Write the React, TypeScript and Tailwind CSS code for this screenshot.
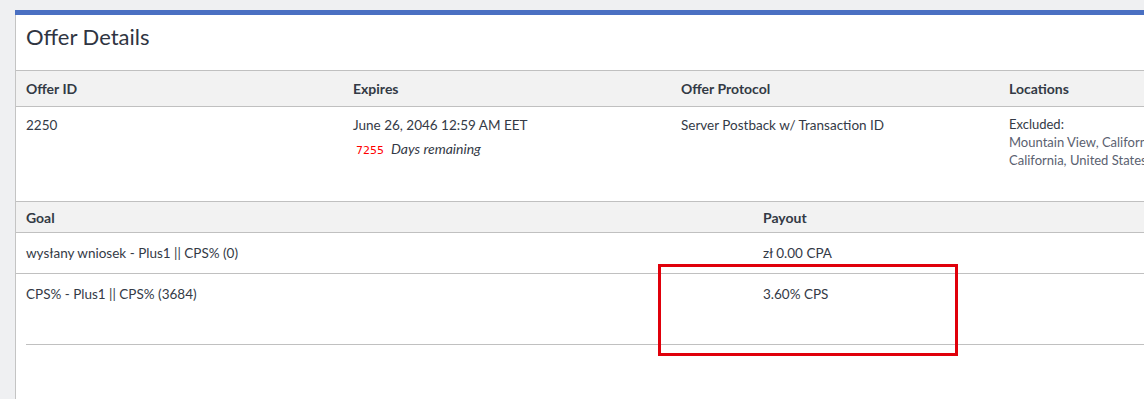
import React from "react";

const font = { fontFamily: "Lato, 'Noto Sans', sans-serif" };

export default function App() {
  return (
    <div className="relative h-[399px] w-[1144px] overflow-hidden bg-[#eff0f2] pl-[15px] pt-[10px] text-[#343a46]" style={font}>
      <div className="w-[1400px] border-t-[5px] border-t-[#4a70c2] bg-white">
        <div className="border-l border-l-[#c4c4c4] h-[400px]">
          <h2 className="pl-[10px] pt-[6px] pb-[18px] text-[22px] leading-[31px] text-[#2f3542]">Offer Details</h2>

          <div className="flex h-[37px] items-center border-y border-[#c0c0c0] bg-[#f2f2f2] text-[14px] font-bold text-[#333a45]">
            <div className="w-[328px] pl-[10px]">Offer ID</div>
            <div className="w-[328px] pl-[9px]">Expires</div>
            <div className="w-[328px] pl-[9px]">Offer Protocol</div>
            <div className="w-[328px] pl-[9px]">Locations</div>
          </div>
          <div className="flex h-[94px] pt-[8px] text-[13.5px] leading-[20px]">
            <div className="w-[328px] pl-[10px]">2250</div>
            <div className="w-[328px] pl-[9px]">
              <div>June 26, 2046 12:59 AM EET</div>
              <div className="mt-[4px] flex items-baseline">
                <span className="ml-[3px] mr-[7px] text-[11px] text-[#ff0000]" style={{ fontFamily: "'DejaVu Sans', sans-serif" }}>7255</span>
                <span className="italic text-[14px]">Days remaining</span>
              </div>
            </div>
            <div className="w-[328px] pl-[9px]">Server Postback w/ Transaction ID</div>
            <div className="w-[328px] pl-[9px] text-[13px]">
              <div className="leading-[18px]">Excluded:</div>
              <div className="leading-[18px] text-[#5a6170]">Mountain View, California, United States</div>
              <div className="leading-[18px] text-[#5a6170]">California, United States</div>
            </div>
          </div>

          <div className="flex h-[32px] items-center border-y border-[#c0c0c0] bg-[#f2f2f2] text-[14px] font-bold text-[#333a45]">
            <div className="w-[737px] pl-[10px]">Goal</div>
            <div className="pl-[10px]">Payout</div>
          </div>
          <div className="flex h-[41px] items-center border-b border-[#c0c0c0] text-[13.5px]">
            <div className="w-[737px] pl-[10px]">wysłany wniosek - Plus1 || CPS% (0)</div>
            <div className="pl-[10px]">zł 0.00 CPA</div>
          </div>
          <div className="flex h-[70px] pt-[10px] text-[13.5px] leading-[20px]">
            <div className="w-[737px] pl-[10px]">CPS% - Plus1 || CPS% (3684)</div>
            <div className="pl-[10px]">3.60% CPS</div>
          </div>
          <div className="ml-[10px] border-t border-[#c0c0c0]" />
        </div>
      </div>

      <div className="absolute left-[658px] top-[264px] h-[92px] w-[300px] border-[3px] border-[#e0000b]" />
    </div>
  );
}
